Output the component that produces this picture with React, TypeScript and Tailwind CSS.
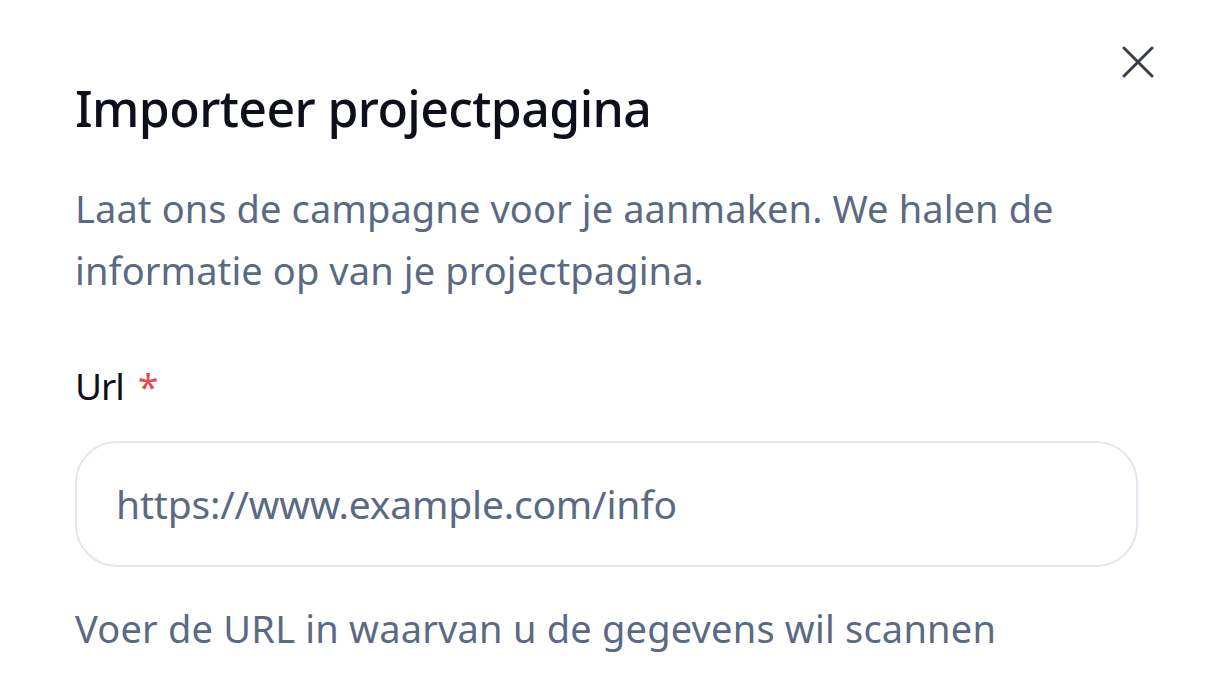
import React from "react";

export default function App() {
  return (
    <div className="w-[1212px] h-[680px] bg-white overflow-hidden relative" style={{ fontFamily: '"Noto Sans", sans-serif' }}>
      <button className="absolute left-[1118px] top-[42px] w-[40px] h-[40px] flex items-center justify-center text-[#3a3f4b]">
        <svg width="32" height="32" viewBox="0 0 32 32" fill="none" stroke="currentColor" strokeWidth="3" strokeLinecap="round">
          <path d="M2 2 L30 30 M30 2 L2 30" />
        </svg>
      </button>
      <div className="flex flex-col pl-[75px] pr-[75px] pt-[78px]">
        <h2 className="text-[50px] leading-[60px] font-medium text-[#0d0f1a] tracking-[-0.6px]">Importeer projectpagina</h2>
        <p className="mt-[39px] text-[38px] leading-[62px] text-[#5b6a84] tracking-[0.1px] w-[1050px]">
          Laat ons de campagne voor je aanmaken. We halen de informatie op van je projectpagina.
        </p>
        <label className="mt-[60px] text-[37px] leading-[50px] text-[#0d0f1a] tracking-[-1px] flex items-center">
          Url <span className="ml-[14px] text-[#e5484d]">*</span>
        </label>
        <div className="mt-[30px] w-[1063px] h-[126px] rounded-[42px] border-2 border-[#e2e8f0] flex items-center pl-[39px]">
          <span className="text-[39px] text-[#5b6a84] tracking-[-0.2px]">https://www.example.com/info</span>
        </div>
        <p className="mt-[36px] text-[38px] leading-[50px] text-[#5b6a84] tracking-[0.2px]">Voer de URL in waarvan u de gegevens wil scannen</p>
      </div>
    </div>
  );
}
